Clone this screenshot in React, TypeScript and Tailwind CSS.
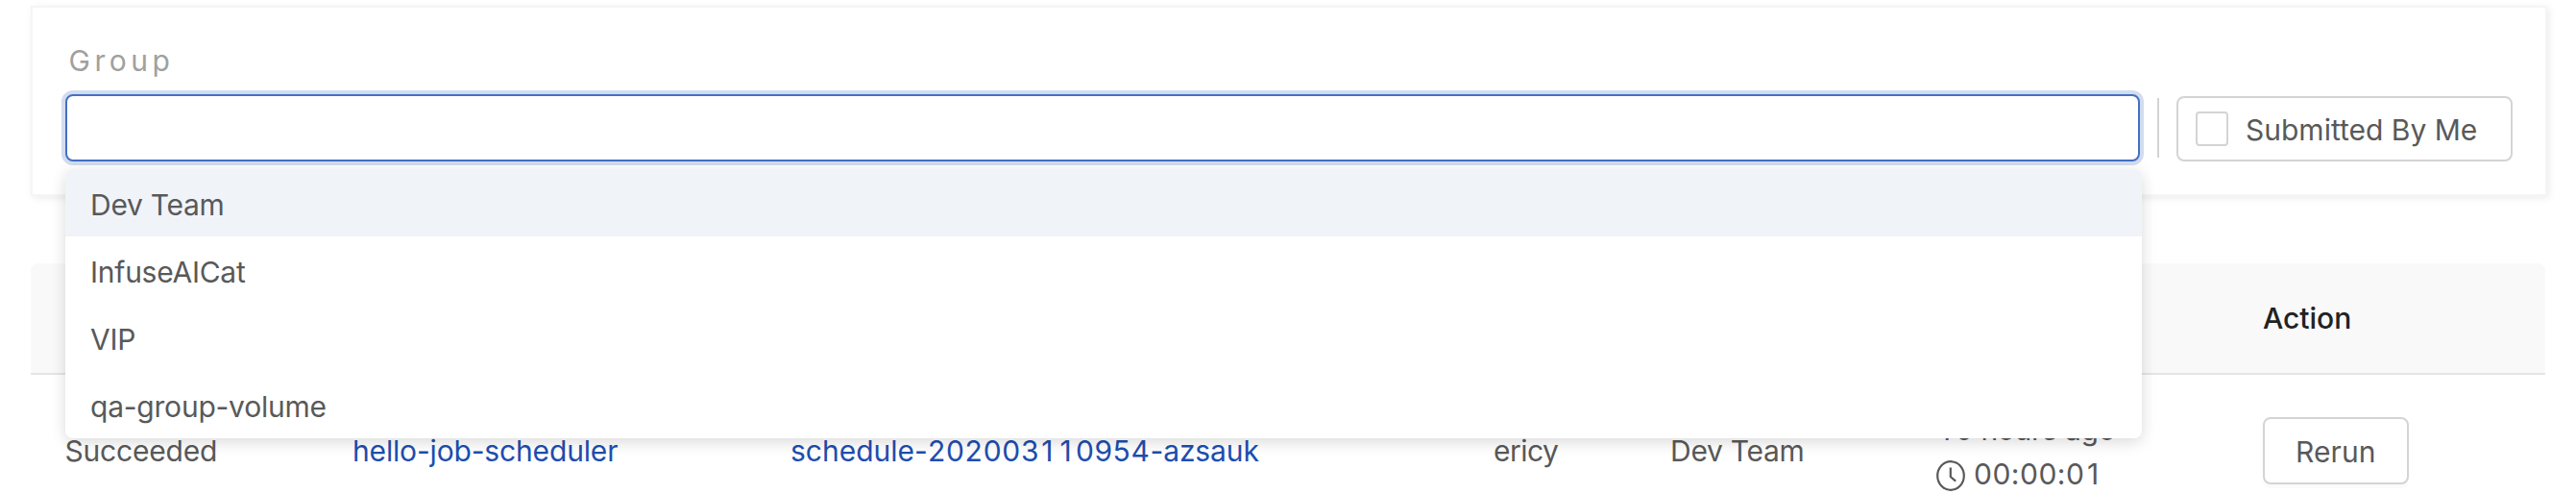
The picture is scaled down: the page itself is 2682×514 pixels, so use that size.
import type { ReactNode } from 'react';

const groups = [
  { name: 'Dev Team', active: true, tracking: 'tracking-[-0.27px]' },
  { name: 'InfuseAICat', active: false, tracking: 'tracking-[-0.25px]' },
  { name: 'VIP', active: false, tracking: 'tracking-[-0.3px]' },
  { name: 'qa-group-volume', active: false, tracking: 'tracking-[-0.22px]' },
];

const columns = 'grid grid-cols-[300px_456px_732px_184px_277px_340px_1fr] pl-[35px]';

function ClockIcon() {
  return (
    <svg className="mt-[9px] h-8 w-[30px] shrink-0" viewBox="0 0 30 32" fill="none" stroke="currentColor" strokeWidth="2.2">
      <ellipse cx="15" cy="16" rx="13.8" ry="14.8" />
      <path d="M14.8 7.5v9.6l5.4 4.6" />
    </svg>
  );
}

function GroupSelect() {
  return (
    <div className="relative w-[2160px]">
      <div className="h-[70px] rounded-lg border-2 border-[#4470c4] bg-white shadow-[0_0_0_4px_#d2dcf0]" />
      <ul className="absolute top-[78px] left-0 z-10 w-[2162px] overflow-hidden rounded-lg bg-white shadow-[0_4px_16px_rgba(0,0,0,0.15)]">
        {groups.map((g) => (
          <li
            key={g.name}
            className={`h-[70px] pt-1 pl-[26px] leading-[66px] ${g.tracking} ${g.active ? 'bg-[#f0f4f9]' : ''}`}
          >
            {g.name}
          </li>
        ))}
      </ul>
    </div>
  );
}

function Cell({ children, className = '' }: { children: ReactNode; className?: string }) {
  return <div className={`pt-[57px] leading-[44px] ${className}`}>{children}</div>;
}

export default function App() {
  return (
    <div className="h-[514px] w-[2682px] overflow-hidden bg-white px-8 pt-1.5 font-['Inter','Liberation_Sans',sans-serif] text-[30px] whitespace-nowrap text-[#595959]">
      <section className="h-[198px] w-[2620px] border-2 border-[#f5f5f5] px-[34px] pt-[34px] shadow-[2px_2px_8px_rgba(0,0,0,0.08)]">
        <div className="h-[56px] pl-[3.5px] leading-[43px] tracking-[4.5px] text-[#a0a0a0]">Group</div>
        <div className="flex">
          <GroupSelect />
          <div className="mt-1 ml-[18px] h-[62px] w-0.5 bg-[#d4d4d4]" />
          <label className="mt-[2px] ml-[18px] flex h-[68px] w-[350px] items-center rounded-lg border-2 border-[#d4d4d4] pl-[18px]">
            <span className="h-9 w-[34px] rounded-[4px] border-2 border-[#d4d4d4]" />
            <span className="ml-[18px] pt-0.5 leading-[44px]">Submitted By Me</span>
          </label>
        </div>
      </section>

      <section className="mt-[70px] w-[2618px]">
        <div className={`${columns} h-[116px] rounded-t-lg border-b-2 border-[#e4e4e4] bg-[#f9f9f9]`}>
          <div className="col-start-7 pt-[35px] leading-[44px] font-medium text-[#222]">Action</div>
        </div>
        <div className={columns}>
          <Cell className="pl-[0.5px] tracking-[-0.2px]">Succeeded</Cell>
          <Cell className="tracking-[-0.16px] text-[#1d4eb0]">hello-job-scheduler</Cell>
          <Cell className="text-[#1d4eb0]">
            schedule-<span className="tracking-[0.75px]">202003</span>
            <span className="pl-[2px] tracking-[7.1px]">11</span>
            <span className="-ml-[3px] tracking-[0.6px]">0954</span>
            <span className="tracking-[-0.1px]">-azsauk</span>
          </Cell>
          <Cell className="tracking-[-0.5px]">ericy</Cell>
          <Cell className="tracking-[-0.27px]">Dev Team</Cell>
          <div className="pt-[34px] leading-[47px]">
            <div className="pl-[3px] tracking-[-0.25px]">
              <span className="tracking-[4.3px]">1</span>0 hours ago
            </div>
            <div className="-mt-px flex gap-[9px]">
              <ClockIcon />
              <div className="tracking-[0.5px]">
                00:00:0<span className="pl-[2.5px]">1</span>
              </div>
            </div>
          </div>
          <div className="pt-[44px]">
            <button className="block h-[70px] w-[152px] rounded-lg border-2 border-[#d4d4d4] bg-white pt-[1px] pl-[32px] text-left leading-[44px] tracking-[0.1px] shadow-[0_4px_0_rgba(0,0,0,0.015)]">
              Rerun
            </button>
          </div>
        </div>
      </section>
    </div>
  );
}
